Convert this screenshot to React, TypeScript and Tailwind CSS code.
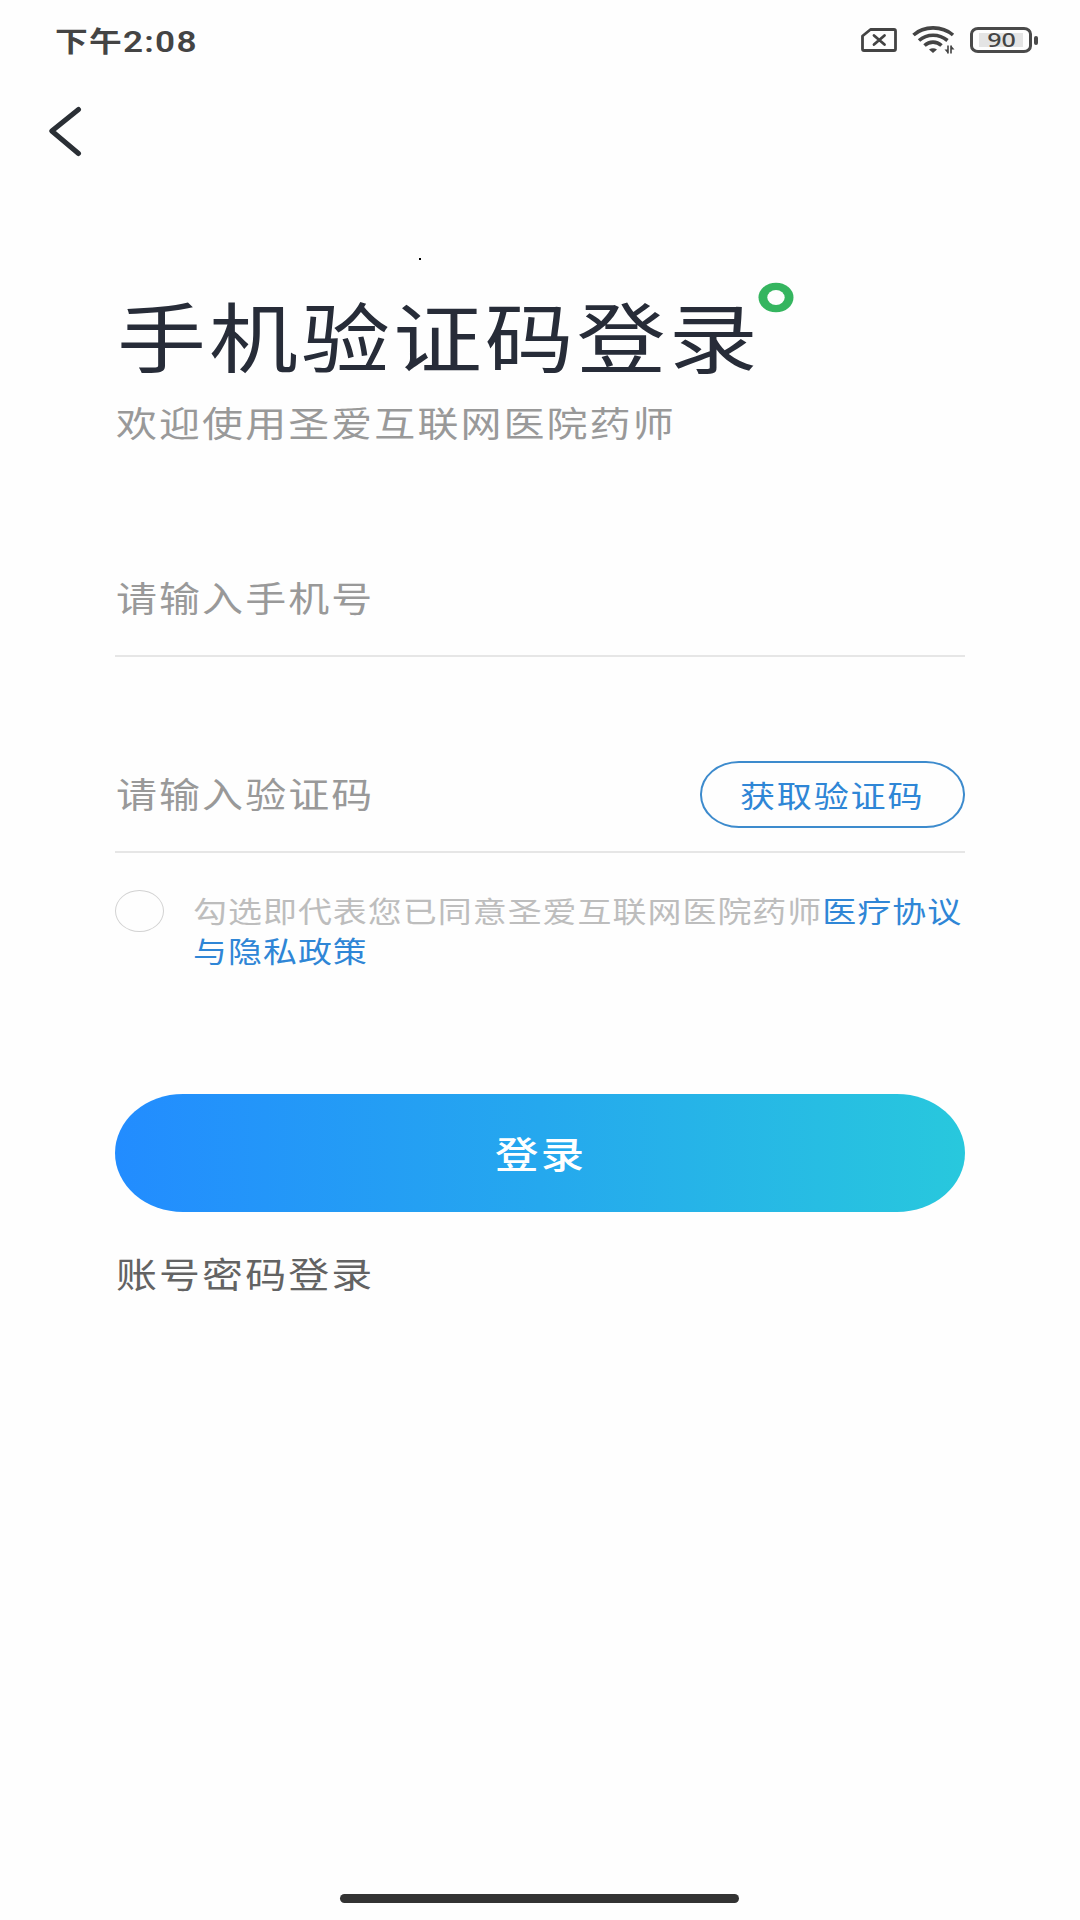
import React, { useState } from 'react';
import clsx from 'clsx';

// Wide text: glyphs are stretched horizontally from the left edge
const stretch = 'inline-block origin-left scale-x-[1.17] whitespace-nowrap';

function StatusBar() {
  return (
    <div className="flex h-[80px] items-start justify-between pl-[55px] pr-[42px] pt-[20px] text-[#444]">
      <span className={clsx(stretch, 'flex h-[40px] text-[28px] font-bold leading-[40px] tracking-[1px]')}>
        下午<span className="font-['Roboto',sans-serif] text-[30px] font-semibold leading-[41px] tracking-[1.1px]">2:08</span>
      </span>
      <div className="flex h-[40px] items-center">
        <svg width="36" height="24" viewBox="0 0 36 24" fill="none" stroke="currentColor">
          <path d="M9.5 1.5H33a1.5 1.5 0 0 1 1.5 1.5v18a1.5 1.5 0 0 1-1.5 1.5H3A1.5 1.5 0 0 1 1.5 21V8z" strokeWidth="2.8" strokeLinejoin="round" />
          <path d="M13 7.5l10.5 9M23.5 7.5L13 16.5" strokeWidth="2.8" strokeLinecap="round" />
        </svg>
        <svg className="ml-[15px]" width="43" height="28" viewBox="0 0 43 28" fill="none" stroke="currentColor" strokeWidth="3.6">
          <path d="M1.5 9C12 -0.5 30 -0.5 41 9" />
          <path d="M7 14.5C15 7.500 27 7.500 35.500 14.500" />
          <path d="M12.500 19.500C17.500 15 24.500 15 29.500 19.500" />
          <path d="M17 23.500a6 4.500 0 0 1 8 0l-4 3.500z" fill="currentColor" stroke="none" />
          <path d="M36 19.500v8M39 27.500v-8" strokeWidth="1.6" />
          <path d="M32.500 23.500l3.500 4v-4zM42.500 23.500l-3.500-4v4z" fill="currentColor" stroke="none" />
        </svg>
        <div className="ml-[15px] flex h-[26px] w-[62px] items-center justify-center rounded-[8px/7px] border-[3.5px] border-[#4a4a4a]">
          <div className="flex h-[14px] w-[44px] items-center justify-center bg-[#e4e4e4]">
            <span className="scale-x-[1.25] font-['Noto_Sans',sans-serif] text-[20px] font-medium leading-[14px]">90</span>
          </div>
        </div>
        <div className="ml-[2px] h-[9px] w-[4px] rounded-full bg-[#4a4a4a]" />
      </div>
    </div>
  );
}

export default function App() {
  const [phone, setPhone] = useState('');
  const [code, setCode] = useState('');
  const [agreed, setAgreed] = useState(false);

  return (
    <div className="relative flex h-[1920px] w-[1080px] flex-col overflow-hidden bg-[#fefefe] font-['Noto_Sans_CJK_SC',sans-serif]">
      <StatusBar />

      {/* Back */}
      <button className="ml-[49px] mt-[26px] h-[51px] w-[33px]">
        <svg width="33" height="51" viewBox="0 0 33 51" fill="none" stroke="#2a2f35" strokeWidth="5" strokeLinecap="round" strokeLinejoin="round">
          <path d="M29.500 3.500L2.800 25L29.500 47.500" />
        </svg>
      </button>

      <div className="absolute left-[419px] top-[258px] h-[2px] w-[2px] bg-black" />

      <main className="mx-[115px] flex flex-col">
        {/* Title */}
        <div className="relative mt-[127px] h-[100px]">
          <h1 className={clsx(stretch, 'ml-[2px] text-[76px] leading-[100px] tracking-[2.6px] text-[#272c38]')}>手机验证码登录</h1>
          <svg className="absolute left-[643px] top-[-2px]" width="36" height="31" viewBox="0 0 36 31">
            <ellipse cx="18" cy="15.500" rx="17.500" ry="14.800" fill="#35b55f" />
            <ellipse cx="18" cy="15.500" rx="8.700" ry="7.500" fill="#fefefe" />
          </svg>
        </div>
        <p className={clsx(stretch, 'ml-px mt-[13px] h-[50px] text-[35px] leading-[50px] tracking-[1.8px] text-[#999]')}>欢迎使用圣爱互联网医院药师</p>

        {/* Phone number */}
        <div className="mt-[125px] h-[85px] border-b-2 border-[#e6e6e6]">
          <input
            type="tel"
            value={phone}
            onChange={(e) => setPhone(e.target.value)}
            placeholder="请输入手机号"
            className="ml-px block h-[50px] w-[600px] origin-left scale-x-[1.17] text-[35px] leading-[50px] tracking-[1.8px] text-[#333] outline-none placeholder:text-[#999]"
          />
        </div>

        {/* Verification code */}
        <div className="mt-[104px] flex h-[92px] items-start justify-between border-b-2 border-[#e6e6e6]">
          <input
            type="text"
            value={code}
            onChange={(e) => setCode(e.target.value)}
            placeholder="请输入验证码"
            className="ml-px mt-[7px] block h-[50px] w-[400px] origin-left scale-x-[1.17] text-[35px] leading-[50px] tracking-[1.8px] text-[#333] outline-none placeholder:text-[#999]"
          />
          <button className="h-[67px] w-[265px] rounded-[39px/33px] border-2 border-[#3d8bcd] pl-[38px] text-left text-[#2f86d6]">
            <span className={clsx(stretch, 'block text-[30px] leading-[61px] tracking-[1.5px]')}>获取验证码</span>
          </button>
        </div>

        {/* Agreement */}
        <div className="mt-[37px] flex h-[84px] items-start">
          <button
            onClick={() => setAgreed(!agreed)}
            className={clsx('h-[42px] w-[49px] shrink-0 rounded-[50%] border-[1.5px] border-[#d2d2d2]', agreed && 'bg-[#2f86d6]')}
          />
          <p className={clsx(stretch, 'ml-[29px] text-[29px] leading-[40px] tracking-[0.88px] text-[#bdbdbd]')}>
            勾选即代表您已同意圣爱互联网医院药师<span className="text-[#2f86d6]">医疗协议</span>
            <br />
            <span className="text-[#2f86d6]">与隐私政策</span>
          </p>
        </div>

        <button className="mt-[120px] h-[118px] rounded-[68px/59px] bg-linear-to-r/srgb from-[#228cff] via-[#25a8ee] to-[#28c8dd] pl-[380px] text-left text-white">
          <span className={clsx(stretch, 'text-[37px] font-medium leading-[118px] tracking-[2.2px]')}>登录</span>
        </button>
        <a className={clsx(stretch, 'ml-px mt-[36px] h-[50px] self-start text-[35px] leading-[50px] tracking-[1.8px] text-[#636363]')}>账号密码登录</a>
      </main>

      {/* Home indicator */}
      <div className="mb-[17px] ml-[340px] mt-auto h-[9px] w-[399px] rounded-full bg-[#333]" />
    </div>
  );
}
